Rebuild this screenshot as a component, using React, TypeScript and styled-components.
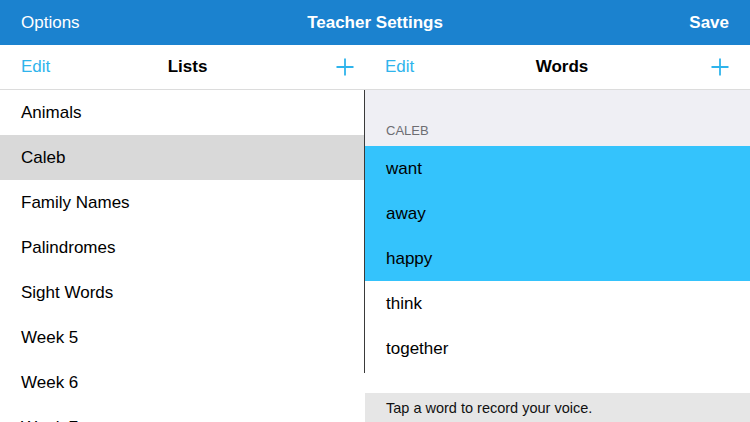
import styled, { createGlobalStyle } from 'styled-components'

const GlobalStyle = createGlobalStyle`
  html, body {
    margin: 0;
    height: 100%;
    overflow: hidden;
    background: #ffffff;
    font-family: 'Liberation Sans', Arial, sans-serif;
    -webkit-font-smoothing: antialiased;
  }
`

const lists = ['Animals', 'Caleb', 'Family Names', 'Palindromes', 'Sight Words', 'Week 5', 'Week 6', 'Week 7', 'Week 8']
const words = [
  { text: 'want', selected: true },
  { text: 'away', selected: true },
  { text: 'happy', selected: true },
  { text: 'think', selected: false },
  { text: 'together', selected: false },
]

const PlusIcon = () => (
  <svg width="18" height="18" viewBox="0 0 18 18" fill="none">
    <path d="M9 0.5V17.5M0.5 9H17.5" stroke="#2fb4ec" strokeWidth="1.8" />
  </svg>
)

const App = () => {
  return (
    <>
      <GlobalStyle />
      <Screen>
        <TopBar>
          <TopButton>Options</TopButton>
          <TopTitle>Teacher Settings</TopTitle>
          <TopButton $bold>Save</TopButton>
        </TopBar>
        <Panes>
          <ListPane>
            <PaneHeader $padRight={10}>
              <EditButton>Edit</EditButton>
              <PaneTitle>Lists</PaneTitle>
              <AddButton>
                <PlusIcon />
              </AddButton>
            </PaneHeader>
            <Rows>
              {lists.map((name) => (
                <ListRow key={name} $selected={name === 'Caleb'}>
                  {name}
                </ListRow>
              ))}
            </Rows>
          </ListPane>
          <WordPane>
            <PaneHeader $padRight={21}>
              <EditButton>Edit</EditButton>
              <PaneTitle $shift={10}>Words</PaneTitle>
              <AddButton>
                <PlusIcon />
              </AddButton>
            </PaneHeader>
            <WordTable>
              <SectionHeader>CALEB</SectionHeader>
              {words.map((w) => (
                <WordRow key={w.text} $selected={w.selected}>
                  {w.text}
                </WordRow>
              ))}
            </WordTable>
            <Footer>Tap a word to record your voice.</Footer>
          </WordPane>
        </Panes>
      </Screen>
    </>
  )
}

export default App

const Screen = styled.div`
  width: 750px;
  height: 422px;
  display: flex;
  flex-direction: column;
  overflow: hidden;
`

const TopBar = styled.header`
  height: 45px;
  flex-shrink: 0;
  background: #1b82cf;
  color: #ffffff;
  display: grid;
  grid-template-columns: 1fr auto 1fr;
  align-items: center;
  padding: 0 21px;
  font-size: 17px;
`

const TopButton = styled.span<{ $bold?: boolean }>`
  font-weight: ${({ $bold }) => ($bold ? 700 : 400)};
  justify-self: ${({ $bold }) => ($bold ? 'end' : 'start')};
`

const TopTitle = styled.span`
  font-weight: 700;
`

const Panes = styled.div`
  flex: 1;
  display: flex;
  min-height: 0;
`

const ListPane = styled.section`
  width: 364px;
  flex-shrink: 0;
  display: flex;
  flex-direction: column;
`

const WordPane = styled.section`
  flex: 1;
  display: flex;
  flex-direction: column;
`

const PaneHeader = styled.div<{ $padRight: number }>`
  height: 44px;
  flex-shrink: 0;
  border-bottom: 1px solid #dcdcdc;
  display: grid;
  grid-template-columns: 1fr auto 1fr;
  align-items: center;
  padding: 0 ${({ $padRight }) => $padRight}px 0 21px;
  font-size: 17px;
`

const EditButton = styled.span`
  color: #2fb4ec;
  justify-self: start;
`

const PaneTitle = styled.span<{ $shift?: number }>`
  font-weight: 700;
  color: #000000;
  margin-left: ${({ $shift }) => $shift ?? 0}px;
`

const AddButton = styled.span`
  justify-self: end;
  display: flex;
  align-items: center;
`

const Rows = styled.div`
  display: flex;
  flex-direction: column;
`

const ListRow = styled.div<{ $selected?: boolean }>`
  height: 45px;
  flex-shrink: 0;
  display: flex;
  align-items: center;
  padding-left: 21px;
  font-size: 17px;
  color: #000000;
  background: ${({ $selected }) => ($selected ? '#d9d9d9' : '#ffffff')};
`

const WordTable = styled.div`
  height: 283px;
  flex-shrink: 0;
  border-left: 1px solid #3a3a3a;
  display: flex;
  flex-direction: column;
`

const SectionHeader = styled.div`
  height: 56px;
  flex-shrink: 0;
  background: #efeff4;
  color: #6d6d72;
  font-size: 13px;
  display: flex;
  align-items: flex-end;
  padding: 0 0 8px 21px;
  box-sizing: border-box;
`

const WordRow = styled(ListRow)`
  background: ${({ $selected }) => ($selected ? '#34c3fc' : '#ffffff')};
`

const Footer = styled.div`
  margin: auto 0 0 1px;
  height: 29px;
  background: #e6e6e6;
  color: #111111;
  font-size: 14.5px;
  display: flex;
  align-items: center;
  padding-left: 21px;
`
